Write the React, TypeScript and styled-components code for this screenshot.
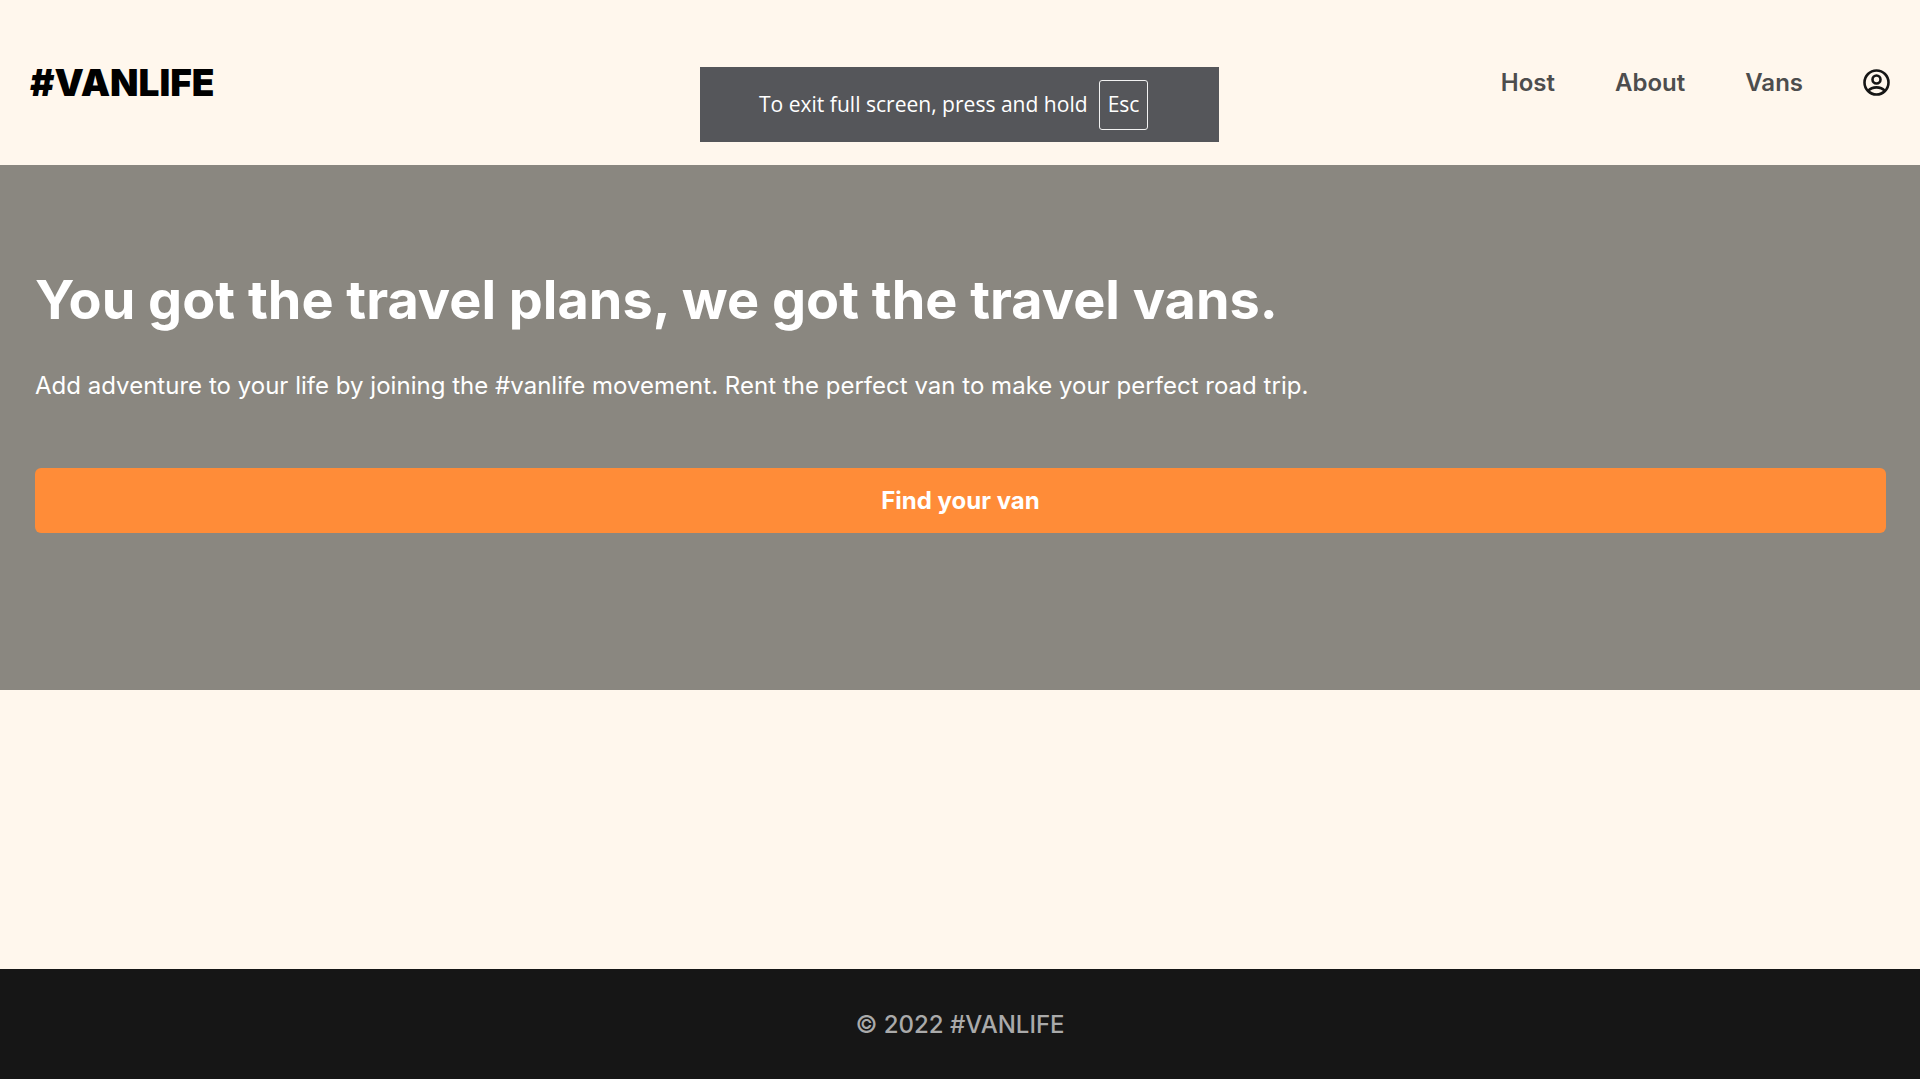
import { createGlobalStyle, styled } from 'styled-components';

const GlobalStyle = createGlobalStyle`
  * {
    box-sizing: border-box;
  }
  html, body {
    margin: 0;
    padding: 0;
  }
  body {
    background-color: #fff7ed;
    font-family: Inter, 'Liberation Sans', sans-serif;
  }
`;

const Page = styled.div`
  height: 1079px;
  display: flex;
  flex-direction: column;
  position: relative;
  overflow: hidden;
`;

const Header = styled.header`
  height: 165px;
  flex-shrink: 0;
  display: flex;
  align-items: flex-start;
  justify-content: space-between;
  padding: 60px 30px 0;
`;

const Logo = styled.a`
  font-size: 37px;
  line-height: 46px;
  font-weight: 900;
  color: #000;
`;

const Nav = styled.nav`
  display: flex;
  align-items: center;
  height: 44px;
  gap: 60px;
`;

const NavLink = styled.a`
  font-size: 24px;
  font-weight: 600;
  color: #4d4d4d;
`;

const UserIcon = styled.svg`
  width: 27px;
  height: 27px;
  display: block;
  fill: none;
  stroke: #161616;
  stroke-width: 2.6;
`;

const Hero = styled.section`
  height: 525px;
  flex-shrink: 0;
  background-color: #8a8780;
  padding: 101px 34px 0 35px;
  color: #fff;
`;

const Title = styled.h1`
  margin: 0;
  font-size: 54px;
  line-height: 68px;
  font-weight: 700;
`;

const Subtitle = styled.p`
  margin: 36px 0 0;
  font-size: 24px;
  line-height: 32px;
  font-weight: 400;
  letter-spacing: 0.02px;
`;

const FindButton = styled.a`
  margin-top: 66px;
  height: 65px;
  display: flex;
  align-items: center;
  justify-content: center;
  background-color: #ff8c38;
  border-radius: 6px;
  font-size: 24px;
  font-weight: 700;
  color: #fff;
`;

const Spacer = styled.div`
  flex: 1;
`;

const Footer = styled.footer`
  height: 110px;
  flex-shrink: 0;
  background-color: #161616;
  display: flex;
  align-items: center;
  justify-content: center;
  font-size: 24px;
  font-weight: 500;
  color: #aaaaaa;
`;

const FullscreenToast = styled.div`
  position: absolute;
  top: 67px;
  left: 700px;
  width: 519px;
  height: 75px;
  display: flex;
  align-items: center;
  gap: 11px;
  padding: 0 0 2px 59px;
  background-color: #55565a;
  font-family: 'Open Sans', 'Noto Sans', sans-serif;
  font-size: 21.05px;
  color: #fff;
`;

const EscKey = styled.span`
  height: 50px;
  margin-top: 2px;
  padding: 0 8px 2px;
  display: flex;
  align-items: center;
  border: 1.5px solid #f2f2f2;
  border-radius: 3px;
`;

function App() {
  return (
    <Page>
      <GlobalStyle />
      <Header>
        <Logo>#VANLIFE</Logo>
        <Nav>
          <NavLink>Host</NavLink>
          <NavLink>About</NavLink>
          <NavLink>Vans</NavLink>
          <UserIcon viewBox="0 0 27 27">
            <circle cx="13.500" cy="13.500" r="12" />
            <circle cx="13.500" cy="10.500" r="4" />
            <path d="M5 22c2.500-2.700 5.300-3.600 8.500-3.600s6 .9 8.500 3.600" />
          </UserIcon>
        </Nav>
      </Header>
      <Hero>
        <Title>You got the travel plans, we got the travel vans.</Title>
        <Subtitle>
          Add adventure to your life by joining the #vanlife movement. Rent the
          perfect van to make your perfect road trip.
        </Subtitle>
        <FindButton>Find your van</FindButton>
      </Hero>
      <Spacer />
      <Footer>© 2022 #VANLIFE</Footer>
      <FullscreenToast>
        To exit full screen, press and hold <EscKey>Esc</EscKey>
      </FullscreenToast>
    </Page>
  );
}

export default App;
